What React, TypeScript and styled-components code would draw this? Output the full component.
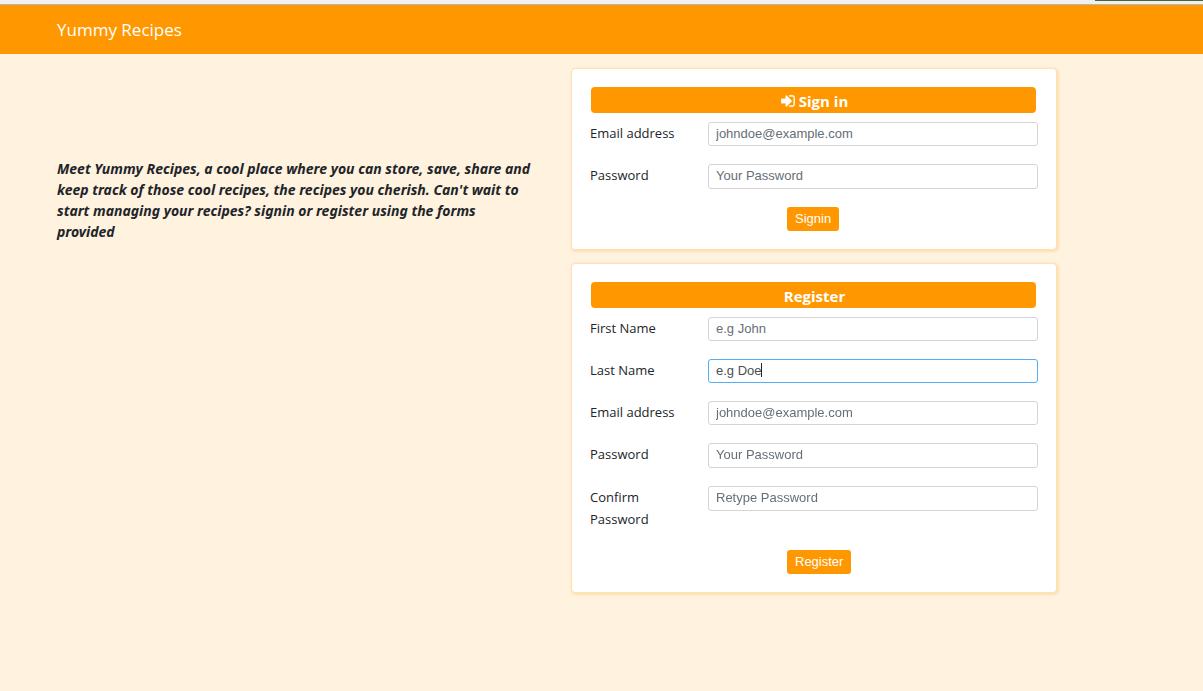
import { useEffect, useRef } from "react";
import styled, { createGlobalStyle, css } from "styled-components";

const GlobalStyle = createGlobalStyle`
  *, *::before, *::after { box-sizing: border-box; }
  html { background: #fff2df; }
  body {
    margin: 0;
    color: #212529;
    font-family: "Open Sans", "Noto Sans", sans-serif;
    font-size: 13px;
    line-height: 21px;
  }
`;

const WindowEdge = styled.div`
  display: flex;
  justify-content: flex-end;
  height: 5px;
  background: #f0f0f0;
  border-bottom: 1px solid #b6b6b6;
`;

const EdgeAccent = styled.span`
  width: 9%;
  height: 1px;
  background: #43683a;
`;

const Navbar = styled.header`
  display: flex;
  align-items: center;
  height: 49px;
  padding: 0 57px;
  background: #ff9800;
`;

const Brand = styled.a`
  color: #fff;
  font-size: 17px;
  line-height: 24px;
  text-decoration: none;
`;

const Content = styled.main`
  display: grid;
  grid-template-columns: 1fr 1fr;
  align-items: start;
  gap: 28px;
  padding: 14px 146px 32px 57px;
`;

const Intro = styled.p`
  margin: 0;
  padding-top: 90px;
  font-family: "Noto Sans", "Open Sans", sans-serif;
  font-size: 14px;
  font-weight: 700;
  font-style: italic;
`;

const Forms = styled.div`
  display: flex;
  flex-direction: column;
  gap: 13px;
`;

const Card = styled.form`
  display: flex;
  flex-direction: column;
  gap: 18px;
  padding: 18px;
  background: #fff;
  border: 1px solid #ffe0b2;
  border-radius: 4px;
  box-shadow: 1px 1px 2px 1px #ffe0b2;
`;

const CardTitle = styled.h2`
  display: flex;
  align-items: center;
  justify-content: center;
  gap: 4px;
  height: 26px;
  margin: 0 2px -9px 1px;
  padding: 2px 0 0 2px;
  border-radius: 4px;
  background: #ff9800;
  color: #fff;
  font-size: 15px;
  font-weight: 700;
`;

const Field = styled.div`
  display: grid;
  grid-template-columns: 88px 1fr;
  align-items: start;
  gap: 30px;
`;

const Label = styled.label`
  padding-bottom: 2px;
  line-height: 22px;
`;

const InputWrap = styled.div`
  position: relative;
  display: flex;
`;

const Caret = styled.span`
  position: absolute;
  top: 4px;
  left: 53px;
  width: 1px;
  height: 14px;
  background: #212529;
`;

const Input = styled.input<{ $active?: boolean }>`
  width: 100%;
  height: 24px;
  padding: 0 7px 1px;
  border: 1px solid #d5d5d5;
  border-radius: 3px;
  outline: none;
  background: #fff;
  color: #495057;
  font: 13px "Liberation Sans", Arial, sans-serif;

  &[type="password"] { height: 25px; padding-bottom: 2px; }
  &::placeholder { color: #666e76; opacity: 1; }
  ${({ $active }) => $active && css`
    border-color: #55aef5;
    caret-color: transparent;
  `}
`;

const Submit = styled.button`
  align-self: flex-start;
  height: 24px;
  margin-left: 197px;
  padding: 0 8px 2px;
  border: 0;
  border-radius: 3px;
  background: #ff9800;
  color: #fff;
  font: 13px "Liberation Sans", Arial, sans-serif;
`;

function SignInIcon() {
  return (
    <svg width="14" height="16" viewBox="0 -1536 1536 1792" fill="currentColor" stroke="currentColor" strokeWidth="40" aria-hidden>
      <g transform="scale(1 -1)">
        <path d="M1184 640q0 -26 -19 -45l-544 -544q-19 -19 -45 -19t-45 19t-19 45v288h-448q-26 0 -45 19t-19 45v384q0 26 19 45t45 19h448v288q0 26 19 45t45 19t45 -19l544 -544q19 -19 19 -45zM1536 992v-704q0 -119 -84.500 -203.500t-203.500 -84.500h-320q-13 0 -22.500 9.500t-9.500 22.500q0 4 -1 20t-.5 26.500t3 23.500t10 19.500t20.500 6.500h320q66 0 113 47t47 113v704q0 66 -47 113t-113 47h-312l-11.500 1t-11.500 3t-8 5.500t-7 9t-2 13.500q0 4 -1 20t-.5 26.500t3 23.500t10 19.500t20.500 6.500h320q119 0 203.500 -84.500t84.500 -203.500z" />
      </g>
    </svg>
  );
}

type FormFieldProps = {
  id: string;
  label: string;
  placeholder: string;
  type?: string;
  value?: string;
  active?: boolean;
};

function FormField({ id, label, placeholder, type = "text", value, active }: FormFieldProps) {
  const input = useRef<HTMLInputElement>(null);

  useEffect(() => {
    if (active && input.current) {
      const end = input.current.value.length;
      input.current.focus();
      input.current.setSelectionRange(end, end);
    }
  }, [active]);

  return (
    <Field>
      <Label htmlFor={id}>{label}</Label>
      <InputWrap>
        <Input
          ref={input}
          id={id}
          type={type}
          placeholder={placeholder}
          defaultValue={value}
          $active={active}
        />
        {active && <Caret />}
      </InputWrap>
    </Field>
  );
}

export default function App() {
  return (
    <>
      <GlobalStyle />
      <WindowEdge>
        <EdgeAccent />
      </WindowEdge>
      <Navbar>
        <Brand href="#">Yummy Recipes</Brand>
      </Navbar>
      <Content>
        <Intro>
          Meet Yummy Recipes, a cool place where you can store, save, share and keep track of
          those cool recipes, the recipes you cherish. Can't wait to start managing your recipes?
          signin or register using the forms
          <br />
          provided
        </Intro>
        <Forms>
          <Card>
            <CardTitle>
              <SignInIcon />
              Sign in
            </CardTitle>
            <FormField id="signin-email" label="Email address" type="email" placeholder="johndoe@example.com" />
            <FormField id="signin-password" label="Password" type="password" placeholder="Your Password" />
            <Submit type="button">Signin</Submit>
          </Card>
          <Card>
            <CardTitle>Register</CardTitle>
            <FormField id="first-name" label="First Name" placeholder="e.g John" />
            <FormField id="last-name" label="Last Name" placeholder="e.g Doe" value="e.g Doe" active />
            <FormField id="email" label="Email address" type="email" placeholder="johndoe@example.com" />
            <FormField id="password" label="Password" type="password" placeholder="Your Password" />
            <FormField id="confirm" label="Confirm Password" type="password" placeholder="Retype Password" />
            <Submit type="button">Register</Submit>
          </Card>
        </Forms>
      </Content>
    </>
  );
}
